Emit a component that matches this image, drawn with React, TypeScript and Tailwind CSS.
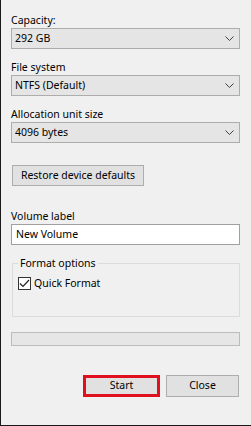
import React from 'react'

const font = { fontFamily: '"Noto Sans", "Open Sans", sans-serif' }

function Chevron() {
  return (
    <svg width="9" height="5" viewBox="0 0 9 5" className="shrink-0">
      <path d="M0.5 0.5 L4.5 4.5 L8.5 0.5" fill="none" stroke="#404040" strokeWidth="1" />
    </svg>
  )
}

function Select({ value }: { value: string }) {
  return (
    <div className="flex h-[21px] w-[229px] items-center justify-between border border-[#adadad] bg-[#e5e5e5] pl-[3px] pr-[5px] text-[10.5px] text-black">
      <span className="leading-none">{value}</span>
      <Chevron />
    </div>
  )
}

function Label({ text, className = '' }: { text: string; className?: string }) {
  return <div className={`h-[16px] text-[10.5px] leading-[16px] text-black ${className}`}>{text}</div>
}

export default function App() {
  return (
    <div
      style={font}
      className="flex h-[426px] w-[251px] flex-col border-b border-l border-[#1a1a1a] bg-[#f0f0f0] pl-[10px] pt-[12px]"
    >
      <Label text="Capacity:" />
      <Select value="292 GB" />
      <Label text="File system" className="mt-[10px]" />
      <Select value="NTFS (Default)" />
      <Label text="Allocation unit size" className="mt-[10px]" />
      <Select value="4096 bytes" />

      <button className="mt-[22px] ml-[1px] flex h-[21px] w-[132px] items-center justify-center whitespace-nowrap border border-[#adadad] bg-[#e1e1e1] text-[10.5px] text-black">
        Restore device defaults
      </button>

      <Label text="Volume label" className="mt-[22px]" />
      <div className="flex h-[21px] w-[229px] items-center border border-[#a0a0a0] bg-white pl-[4px] text-[10.5px] text-black">
        New Volume
      </div>

      <fieldset className="mt-[10px] ml-[1px] h-[62px] w-[228px] border border-[#dcdcdc] px-[5px]">
        <legend className="px-[2px] text-[10.5px] leading-[16px] text-black">Format options</legend>
        <div className="mt-[4px] flex items-center gap-[3px]">
          <div className="flex h-[13px] w-[13px] items-center justify-center border border-[#333333] bg-white">
            <svg width="11" height="9" viewBox="0 0 11 9">
              <path d="M1 4.5 L4 7.5 L10 1" fill="none" stroke="#222" strokeWidth="1.2" />
            </svg>
          </div>
          <span className="text-[10.5px] leading-[16px] text-black">Quick Format</span>
        </div>
      </fieldset>

      <div className="mt-[15px] h-[14px] w-[229px] border border-[#bcbcbc] bg-[#e6e6e6]" />

      <div className="mt-[29px] flex w-[229px] justify-end gap-[6px]">
        <button className="flex h-[22px] w-[77px] items-center justify-center border-[3px] border-[#e0101f] bg-[#e1e1e1] text-[10.5px] text-black">
          Start
        </button>
        <button className="mr-[1px] flex h-[22px] w-[73px] items-center justify-center border border-[#adadad] bg-[#e1e1e1] text-[10.5px] text-black">
          Close
        </button>
      </div>
    </div>
  )
}
